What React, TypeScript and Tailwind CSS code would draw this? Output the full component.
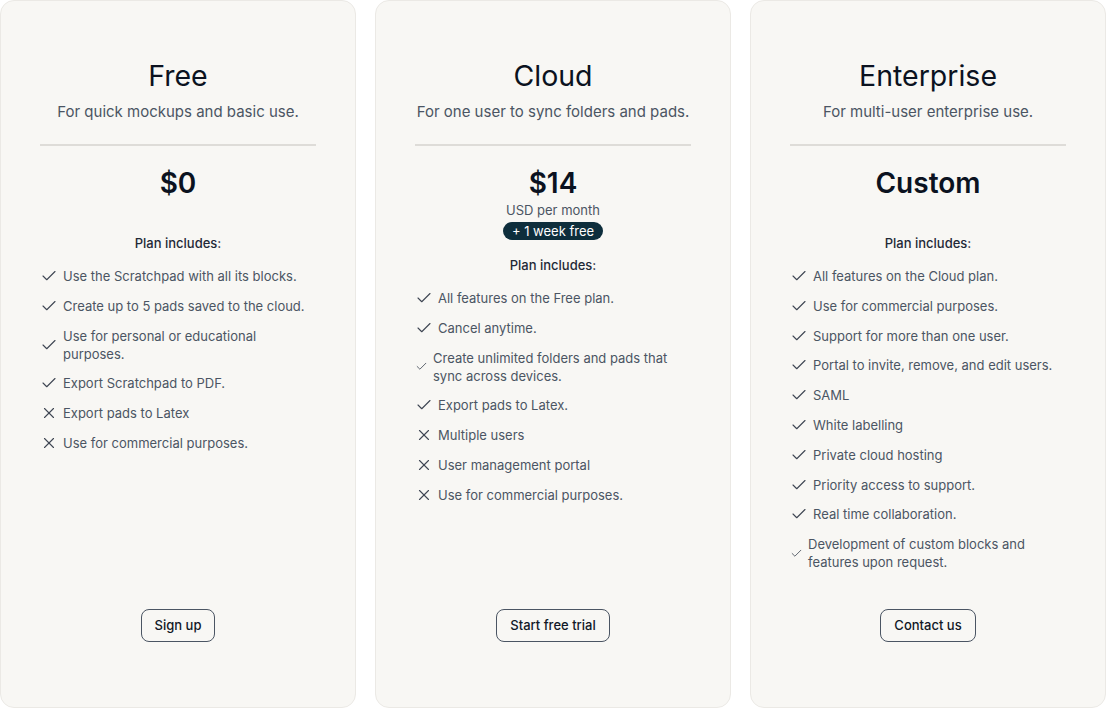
import React from "react";

type Item = { text: string; ok: boolean; small?: boolean };

type Plan = {
  name: string;
  desc: string;
  price: string;
  extra?: boolean;
  items: Item[];
  cta: string;
};

const plans: Plan[] = [
  {
    name: "Free",
    desc: "For quick mockups and basic use.",
    price: "$0",
    items: [
      { text: "Use the Scratchpad with all its blocks.", ok: true },
      { text: "Create up to 5 pads saved to the cloud.", ok: true },
      { text: "Use for personal or educational purposes.", ok: true },
      { text: "Export Scratchpad to PDF.", ok: true },
      { text: "Export pads to Latex", ok: false },
      { text: "Use for commercial purposes.", ok: false },
    ],
    cta: "Sign up",
  },
  {
    name: "Cloud",
    desc: "For one user to sync folders and pads.",
    price: "$14",
    extra: true,
    items: [
      { text: "All features on the Free plan.", ok: true },
      { text: "Cancel anytime.", ok: true },
      { text: "Create unlimited folders and pads that sync across devices.", ok: true, small: true },
      { text: "Export pads to Latex.", ok: true },
      { text: "Multiple users", ok: false },
      { text: "User management portal", ok: false },
      { text: "Use for commercial purposes.", ok: false },
    ],
    cta: "Start free trial",
  },
  {
    name: "Enterprise",
    desc: "For multi-user enterprise use.",
    price: "Custom",
    items: [
      { text: "All features on the Cloud plan.", ok: true },
      { text: "Use for commercial purposes.", ok: true },
      { text: "Support for more than one user.", ok: true },
      { text: "Portal to invite, remove, and edit users.", ok: true },
      { text: "SAML", ok: true },
      { text: "White labelling", ok: true },
      { text: "Private cloud hosting", ok: true },
      { text: "Priority access to support.", ok: true },
      { text: "Real time collaboration.", ok: true },
      { text: "Development of custom blocks and features upon request.", ok: true, small: true },
    ],
    cta: "Contact us",
  },
];

function CheckIcon({ size }: { size: number }) {
  return (
    <svg width={size} height={size} viewBox="0 0 24 24" fill="none" stroke="#3f4653" strokeWidth={1.5} strokeLinecap="round" strokeLinejoin="round" className="shrink-0">
      <path d="M20 6 9 17l-5-5" />
    </svg>
  );
}

function XIcon({ size }: { size: number }) {
  return (
    <svg width={size} height={size} viewBox="0 0 24 24" fill="none" stroke="#3f4653" strokeWidth={1.5} strokeLinecap="round" strokeLinejoin="round" className="shrink-0">
      <path d="M18 6 6 18" />
      <path d="m6 6 12 12" />
    </svg>
  );
}

function Card({ plan }: { plan: Plan }) {
  return (
    <div className="flex h-[708px] flex-col rounded-[14px] border border-[#ebe9e5] bg-[#f8f7f4] px-[39px] pt-[58px] pb-[65px]">
      <div className="text-center text-[28.5px] leading-[34px] text-[#0b1220]">{plan.name}</div>
      <div className="mt-[9px] text-center text-[15px] leading-[20px] text-[#4b5563]">{plan.desc}</div>
      <div className="mt-[22px] h-[2px] bg-[#dedcd8]" />
      <div className="mt-[19px] text-center text-[28px] font-semibold leading-[36px] text-[#0b1220]">{plan.price}</div>
      {plan.extra ? (
        <div className="flex flex-col items-center">
          <div className="text-[13px] leading-[18px] text-[#4b5563]">USD per month</div>
          <div className="mt-[3px] rounded-full bg-[#0e2e3c] px-[9px] text-[13px] leading-[18px] text-white">+ 1 week free</div>
          <div className="h-[16px]" />
        </div>
      ) : (
        <div className="h-[33px]" />
      )}
      <div className="text-center text-[13px] font-medium leading-[18px] text-[#1f2937]">Plan includes:</div>
      <ul className="mt-[15px] flex flex-col gap-[11.8px]">
        {plan.items.map((it, i) => (
          <li key={i} className="flex items-center">
            <div className={`flex ${it.small ? "w-[18px]" : "w-[23px]"} shrink-0 items-center`}>
              {it.ok ? <CheckIcon size={it.small ? 13 : 18} /> : <XIcon size={18} />}
            </div>
            <span className="text-[13px] leading-[18px] text-[#4b5563]">{it.text}</span>
          </li>
        ))}
      </ul>
      <div className="mt-auto flex justify-center">
        <button className="h-[33px] rounded-lg border border-[#4b5563] px-[13px] text-[13px] font-medium text-[#111827]">
          {plan.cta}
        </button>
      </div>
    </div>
  );
}

export default function App() {
  return (
    <div className="h-[708px] w-[1108px] bg-white" style={{ fontFamily: "Inter, 'Noto Sans', sans-serif" }}>
      <div className="grid h-full w-[1106px] grid-cols-3 gap-[19px]">
        {plans.map((p) => (
          <Card key={p.name} plan={p} />
        ))}
      </div>
    </div>
  );
}
